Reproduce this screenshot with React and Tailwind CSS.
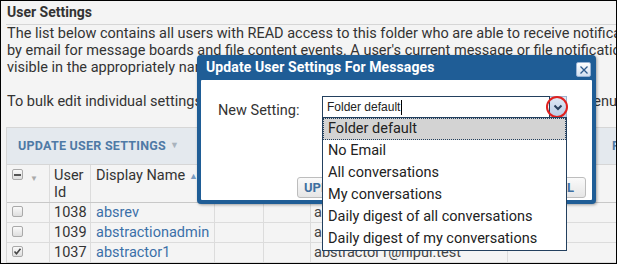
import React from "react";

function Box({ checked, minus }) {
  return (
    <div className="w-[11px] h-[11px] rounded-[2px] border border-[#a9a9a9] bg-gradient-to-b from-[#fafafa] to-[#dedede] flex items-center justify-center">
      {minus && <div className="w-[7px] h-[2px] bg-[#555]" />}
      {checked && (
        <svg width="9" height="9" viewBox="0 0 9 9">
          <path d="M1.5 4.5 L3.5 6.8 L7.5 1.8" fill="none" stroke="#444" strokeWidth="1.6" />
        </svg>
      )}
    </div>
  );
}

const rows = [
  { id: "1038", name: "absrev", email: "absrev@nlpui.test", checked: false },
  { id: "1039", name: "abstractionadmin", email: "abstractionadmin@nlpui.test", checked: false },
  { id: "1037", name: "abstractor1", email: "abstractor1@nlpui.test", checked: true },
];

const items = [
  "Folder default",
  "No Email",
  "All conversations",
  "My conversations",
  "Daily digest of all conversations",
  "Daily digest of my conversations",
];

export default function App() {
  return (
    <div className="relative w-[617px] h-[264px] overflow-hidden border border-black bg-[#f4f4f4] font-['Roboto',sans-serif] text-[#333]">
      <div className="pl-[5px] w-[900px]">
        <div className="h-[24px] w-[611px] border-b border-[#d6d6d6] pl-[1px] text-[14px] font-bold leading-[23px] text-[#333]">
          User Settings
        </div>
        <div className="pl-[1px] text-[14.5px] leading-[17px] text-[#333] whitespace-nowrap">
          <div>The list below contains all users with READ access to this folder who are able to receive notifications</div>
          <div>by email for message boards and file content events. A user's current message or file notification setting is</div>
          <div>visible in the appropriately named column.</div>
          <div className="h-[17px]" />
          <div>To bulk edit individual settings: select one or more users, click the "Update User Settings" menu, and select the type.</div>
        </div>
        <div className="mt-[17px] w-[900px] border-t border-l border-[#d6d6d6]">
          <div className="h-[37px] bg-[#e4e9ee] border-b border-[#d6d6d6] flex items-center text-[12.5px] font-bold tracking-[0.25px] text-[#4f7aa6]">
            <div className="w-[605px] pl-[11px] flex items-center">
              <span>UPDATE USER SETTINGS</span>
              <span className="ml-[4px] text-[9px] text-[#a9b3bd]">▼</span>
            </div>
            <span>REPORTS</span>
          </div>
          <div className="flex h-[38px] bg-[#f4f4f4] border-b border-[#c8c8c8] text-[14.5px] leading-[17px]">
            <div className="w-[43px] border-r border-[#dcdcdc] flex items-start pt-[4px] pl-[5px]">
              <Box minus />
              <span className="ml-[7px] mt-[1px] text-[8px] text-[#aaa]">▼</span>
            </div>
            <div className="w-[41px] border-r border-[#dcdcdc] pl-[4px] pt-[2px]">User<br />Id</div>
            <div className="w-[124px] border-r border-[#dcdcdc] pl-[5px] pt-[2px] flex">
              <span>Display Name</span>
              <span className="ml-[4px] mt-[1px] text-[9px] text-[#7a9cc2]">▲</span>
            </div>
            <div className="w-[49px] border-r border-[#dcdcdc]" />
            <div className="w-[47px] border-r border-[#dcdcdc]" />
            <div className="w-[197px] border-r border-[#dcdcdc]" />
            <div className="flex-1" />
          </div>
          {rows.map((r) => (
            <div key={r.id} className="flex h-[20px] border-b border-[#dcdcdc] text-[14.5px] leading-[19px]">
              <div className="w-[43px] border-r border-[#dcdcdc] pl-[5px] pt-[3px]">
                <Box checked={r.checked} />
              </div>
              <div className="w-[41px] border-r border-[#dcdcdc] pl-[4px] text-[#333]">{r.id}</div>
              <div className="w-[124px] border-r border-[#dcdcdc] pl-[5px] text-[#3b70a8]">{r.name}</div>
              <div className="w-[49px] border-r border-[#dcdcdc]" />
              <div className="w-[47px] border-r border-[#dcdcdc]" />
              <div className="w-[197px] border-r border-[#dcdcdc] pl-[3px] text-[#444]">{r.email}</div>
              <div className="flex-1" />
            </div>
          ))}
        </div>
      </div>

      {/* Dialog */}
      <div className="absolute left-[196px] top-[54px] w-[399px] h-[149px] rounded-[4px] bg-[#1f5d96] px-[4px] pb-[4px] flex flex-col shadow-[1px_1px_3px_rgba(0,0,0,0.35)]">
        <div className="h-[25px] flex items-center pl-[5px] text-[14px] font-bold text-white tracking-[0.1px]">
          Update User Settings For Messages
        </div>
        <div className="absolute right-[5px] top-[7px] w-[15px] h-[15px] rounded-[2px] bg-gradient-to-b from-[#ffffff] to-[#d3e0f0] border border-[#9ab4d4] flex items-center justify-center">
          <svg width="10" height="10" viewBox="0 0 10 10">
            <path d="M1.5 1.5 L8.5 8.5 M8.5 1.5 L1.5 8.5" stroke="#2d5a8c" strokeWidth="1.3" />
          </svg>
        </div>
        <div className="relative flex-1 bg-white rounded-[1px]">
          <div className="flex pt-[16px] pl-[17px]">
            <div className="w-[104px] text-[14.5px] text-[#333] pt-[4px]">New Setting:</div>
            <div className="flex h-[22px]">
              <div className="w-[228px] h-[22px] border border-[#23405e] bg-white flex items-center pl-[4px] font-['Liberation_Sans',sans-serif] text-[12px] text-[#222]">
                Folder default<span className="w-[1px] h-[15px] bg-black ml-[1px]" />
              </div>
              <div className="w-[17px] h-[22px] border border-l-0 border-[#9fb4cf] bg-gradient-to-b from-[#e1e9f5] to-[#b9cbe4] flex items-center justify-center">
                <svg width="10" height="7" viewBox="0 0 10 7">
                  <path d="M1.5 1.5 L5 5 L8.5 1.5" fill="none" stroke="#2a3f5c" strokeWidth="2" />
                </svg>
              </div>
            </div>
          </div>
          <div className="absolute left-[96px] bottom-[2px] w-[74px] h-[21px] rounded-[3px] border border-[#bdbdbd] bg-gradient-to-b from-[#fafafa] to-[#e6e6e6] text-[13px] font-bold text-[#3f6fa0] flex items-center pl-[6px]">
            UPDATE
          </div>
          <div className="absolute right-[6px] bottom-[2px] w-[74px] h-[21px] rounded-[3px] border border-[#bdbdbd] bg-gradient-to-b from-[#fafafa] to-[#e6e6e6] text-[13px] font-bold text-[#3f6fa0] flex items-center justify-end pr-[11px]">
            CANCEL
          </div>
        </div>
      </div>

      {/* Red circle highlight */}
      <div className="absolute left-[545px] top-[95px] w-[22px] h-[22px] rounded-full border-[2px] border-[#e0201e]" />

      {/* Dropdown list */}
      <div className="absolute left-[321px] top-[116px] w-[245px] h-[134px] bg-white border border-[#23405e] text-[14.5px] text-[#222]">
        {items.map((it, i) => (
          <div
            key={it}
            className={
              i === 0
                ? "h-[22px] flex items-center pl-[4px] bg-[#d3d3d3] border border-dotted border-[#23405e]"
                : "h-[22px] flex items-center pl-[5px]"
            }
          >
            {it}
          </div>
        ))}
      </div>
    </div>
  );
}
